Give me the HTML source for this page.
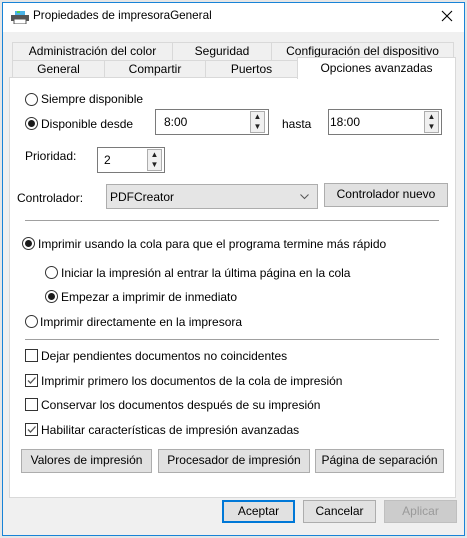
<!DOCTYPE html><html><head><meta charset="utf-8"><style>
*{box-sizing:border-box;margin:0;padding:0}
body{width:467px;height:538px;background:#e6e6e6;font-family:"Liberation Sans",sans-serif;font-size:12px;color:#000;position:relative;overflow:hidden}
.a{position:absolute;white-space:nowrap}
#win{position:absolute;left:2px;top:2px;width:463px;height:534px;border:1px solid #1883d7;background:#f0f0f0}
#title{position:absolute;left:3px;top:3px;width:461px;height:29px;background:#fff}
.tab{position:absolute;height:18px;border:1px solid #d9d9d9;border-bottom:none;background:#f0f0f0;text-align:center;line-height:17px}
.box{position:absolute;border:1px solid #7a7a7a;background:#fff}
.btn{position:absolute;border:1px solid #adadad;background:#e1e1e1;text-align:center;line-height:21px;height:24px}
.rad{position:absolute;width:13px;height:13px;border:1px solid #333;border-radius:50%;background:#fff}
.rad.on::after{content:"";position:absolute;left:2px;top:2px;width:7px;height:7px;border-radius:50%;background:#1a1a1a}
.chk{position:absolute;width:13px;height:13px;border:1px solid #333;background:#fff}
.sep{position:absolute;height:1px;background:#a0a0a0}
.spin{position:absolute;width:15px;border:1px solid #adadad;background:#f0f0f0}
.spin div{height:50%;font-size:8px;text-align:center;line-height:10px;color:#222}
</style></head><body>
<div id="win"></div>
<div id="title"></div>
<svg class="a" style="left:11px;top:11px" width="18" height="13"><rect x="4" y="0" width="10" height="4" fill="#4ab3e8"/><rect x="6" y="0" width="3" height="2" fill="#5c5"/><rect x="0" y="4" width="18" height="6" fill="#555"/><rect x="3" y="8" width="12" height="5" fill="#fff" stroke="#555"/></svg>
<div class="a" style="left:33px;top:9px;font-size:11.7px">Propiedades de impresoraGeneral</div>
<svg class="a" style="left:441px;top:10px" width="12" height="12"><path d="M1 1L11 11M11 1L1 11" stroke="#000" stroke-width="1.1"/></svg>

<div class="a" style="left:9px;top:77px;width:447px;height:421px;background:#fff;border:1px solid #d9d9d9"></div>
<div class="tab" style="left:12px;top:42px;width:161px">Administración del color</div>
<div class="tab" style="left:172px;top:42px;width:100px">Seguridad</div>
<div class="tab" style="left:271px;top:42px;width:183px">Configuración del dispositivo</div>
<div class="tab" style="left:12px;top:60px;width:93px;height:17px">General</div>
<div class="tab" style="left:104px;top:60px;width:102px;height:17px">Compartir</div>
<div class="tab" style="left:205px;top:60px;width:93px;height:17px">Puertos</div>
<div class="tab" style="left:297px;top:57px;width:159px;height:22px;background:#fff;line-height:20px;border-color:#d9d9d9">Opciones avanzadas</div>

<div class="rad" style="left:25px;top:93px"></div><div class="a" style="left:41px;top:92px">Siempre disponible</div>
<div class="rad on" style="left:25px;top:117px"></div><div class="a" style="left:41px;top:117px">Disponible desde</div>
<div class="box" style="left:155px;top:109px;width:114px;height:26px"><span class="a" style="left:8px;top:5px">8:00</span></div>
<div class="spin" style="left:250px;top:111px;height:22px"><div>▲</div><div>▼</div></div>
<div class="a" style="left:282px;top:117px">hasta</div>
<div class="box" style="left:328px;top:109px;width:114px;height:26px"><span class="a" style="left:1px;top:5px">18:00</span></div>
<div class="spin" style="left:424px;top:111px;height:22px"><div>▲</div><div>▼</div></div>

<div class="a" style="left:25px;top:149px">Prioridad:</div>
<div class="box" style="left:97px;top:147px;width:68px;height:26px"><span class="a" style="left:6px;top:5px">2</span></div>
<div class="spin" style="left:147px;top:149px;height:22px"><div>▲</div><div>▼</div></div>

<div class="a" style="left:17px;top:191px">Controlador:</div>
<div class="a" style="left:106px;top:184px;width:212px;height:25px;background:#e5e5e5;border:1px solid #adadad"><span class="a" style="left:3px;top:5px">PDFCreator</span><svg class="a" style="left:193px;top:9px" width="9" height="6"><path d="M0.5 0.5L4.5 4.5L8.5 0.5" stroke="#555" fill="none"/></svg></div>
<div class="btn" style="left:324px;top:183px;width:124px">Controlador nuevo</div>
<div class="sep" style="left:25px;top:220px;width:414px"></div>

<div class="rad on" style="left:22px;top:237px"></div><div class="a" style="left:38px;top:237px">Imprimir usando la cola para que el programa termine más rápido</div>
<div class="rad" style="left:45px;top:266px"></div><div class="a" style="left:61px;top:266px">Iniciar la impresión al entrar la última página en la cola</div>
<div class="rad on" style="left:45px;top:290px"></div><div class="a" style="left:61px;top:290px">Empezar a imprimir de inmediato</div>
<div class="rad" style="left:25px;top:315px"></div><div class="a" style="left:40px;top:315px">Imprimir directamente en la impresora</div>
<div class="sep" style="left:25px;top:339px;width:414px"></div>

<div class="chk" style="left:25px;top:349px"></div><div class="a" style="left:41px;top:349px">Dejar pendientes documentos no coincidentes</div>
<div class="chk" style="left:25px;top:374px"><svg width="11" height="11"><path d="M2 5.5L4.5 8L9.5 2.5" stroke="#555" fill="none" stroke-width="1.3"/></svg></div><div class="a" style="left:41px;top:374px">Imprimir primero los documentos de la cola de impresión</div>
<div class="chk" style="left:25px;top:398px"></div><div class="a" style="left:41px;top:398px">Conservar los documentos después de su impresión</div>
<div class="chk" style="left:25px;top:423px"><svg width="11" height="11"><path d="M2 5.5L4.5 8L9.5 2.5" stroke="#555" fill="none" stroke-width="1.3"/></svg></div><div class="a" style="left:41px;top:423px">Habilitar características de impresión avanzadas</div>

<div class="btn" style="left:21px;top:449px;width:131px">Valores de impresión</div>
<div class="btn" style="left:158px;top:449px;width:152px">Procesador de impresión</div>
<div class="btn" style="left:315px;top:449px;width:129px">Página de separación</div>

<div class="btn" style="left:222px;top:500px;width:73px;height:23px;border:2px solid #0078d7;line-height:19px">Aceptar</div>
<div class="btn" style="left:303px;top:500px;width:73px;height:23px;line-height:21px">Cancelar</div>
<div class="btn" style="left:384px;top:500px;width:73px;height:23px;line-height:21px;background:#ccc;border-color:#bfbfbf;color:#9a9a9a">Aplicar</div>
</body></html>
